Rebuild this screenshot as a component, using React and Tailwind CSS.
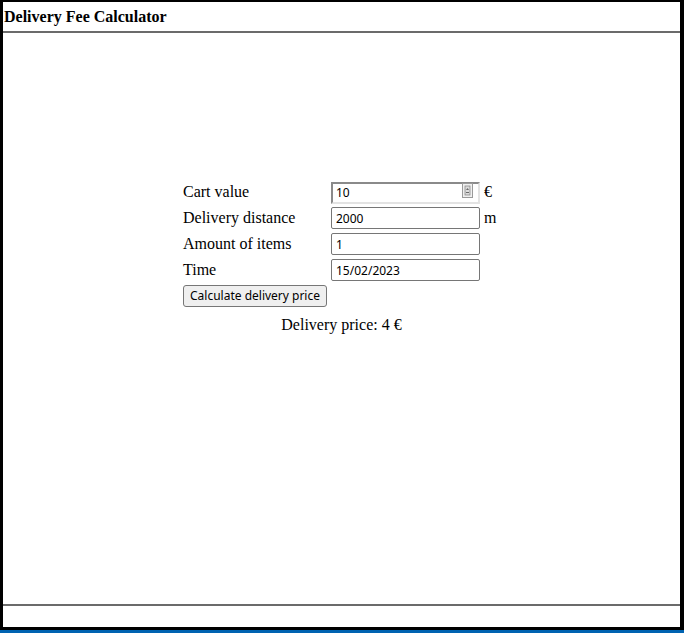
import { useState } from "react";

const serif = { fontFamily: '"Liberation Serif", "Times New Roman", serif' };
const sans = { fontFamily: '"Noto Sans", "Open Sans", sans-serif' };

function SpinIcon() {
  return (
    <svg width="11" height="15" viewBox="0 0 11 15" className="absolute right-[7px] top-[3px]">
      <rect x="0.5" y="0.5" width="10" height="14" fill="#f0f0f0" stroke="#9a9a9a" />
      <rect x="3" y="3" width="5" height="9" fill="#dcdcdc" stroke="#8a8a8a" strokeWidth="0.8" />
      <path d="M4 7 L5.5 5 L7 7 Z" fill="#6a6a6a" />
      <rect x="4" y="9" width="3" height="1" fill="#6a6a6a" />
    </svg>
  );
}

export default function App() {
  const [form, setForm] = useState({
    cart: "10",
    distance: "2000",
    items: "1",
    time: "15/02/2023"
  });

  const handleChange = (e) => {
    setForm({ ...form, [e.target.name]: e.target.value });
  };

  const inputClass =
    "w-[149px] h-[22px] border border-[#767676] rounded-[2px] px-[4px] text-[12px] text-black outline-none bg-white";

  return (
    <div className="w-[684px] h-[633px] flex flex-col bg-black">
      <div className="flex-1 flex flex-col bg-white border-l-[3px] border-t-[2px] border-r-[4px] border-b-[3px] border-black">
        <div className="h-[29px] flex items-center pl-[1px]">
          <h1 className="text-[16px] font-bold text-black leading-none" style={serif}>
            Delivery Fee Calculator
          </h1>
        </div>
        <div className="h-[2px] bg-[#6b6b6b]" />

        <main className="flex-1 pt-[148px] pl-[180px]">
          <div className="w-[317px]" style={serif}>
            <div className="grid grid-cols-[148px_auto] auto-rows-[22px] gap-y-[4px] text-[16px] text-black">
              <label className="flex items-center">Cart value</label>
              <div className="flex items-center">
                <div className="relative">
                  <input
                    name="cart"
                    value={form.cart}
                    onChange={handleChange}
                    className="w-[149px] h-[22px] border-2 border-t-[#8a8a8a] border-l-[#8a8a8a] border-b-[#e3e3e3] border-r-[#e3e3e3] px-[3px] text-[12px] text-black outline-none bg-white"
                    style={sans}
                  />
                  <SpinIcon />
                </div>
                <span className="ml-[4px]">€</span>
              </div>

              <label className="flex items-center">Delivery distance</label>
              <div className="flex items-center">
                <input name="distance" value={form.distance} onChange={handleChange} className={inputClass} style={sans} />
                <span className="ml-[4px]">m</span>
              </div>

              <label className="flex items-center">Amount of items</label>
              <div className="flex items-center">
                <input name="items" value={form.items} onChange={handleChange} className={inputClass} style={sans} />
              </div>

              <label className="flex items-center">Time</label>
              <div className="flex items-center">
                <input name="time" value={form.time} onChange={handleChange} className={inputClass} style={sans} />
              </div>

              <div className="col-span-2 flex items-center">
                <button
                  className="w-[144px] h-[22px] border border-[#767676] rounded-[3px] bg-[#efefef] text-[12px] text-black leading-none"
                  style={sans}
                >
                  Calculate delivery price
                </button>
              </div>
            </div>

            <p className="mt-[6px] text-center text-[16px] text-black">Delivery price: 4 €</p>
          </div>
        </main>

        <div className="h-[2px] bg-[#6b6b6b]" />
        <div className="h-[21px]" />
      </div>
      <div className="h-[3px] bg-[#0063b1]" />
    </div>
  );
}
